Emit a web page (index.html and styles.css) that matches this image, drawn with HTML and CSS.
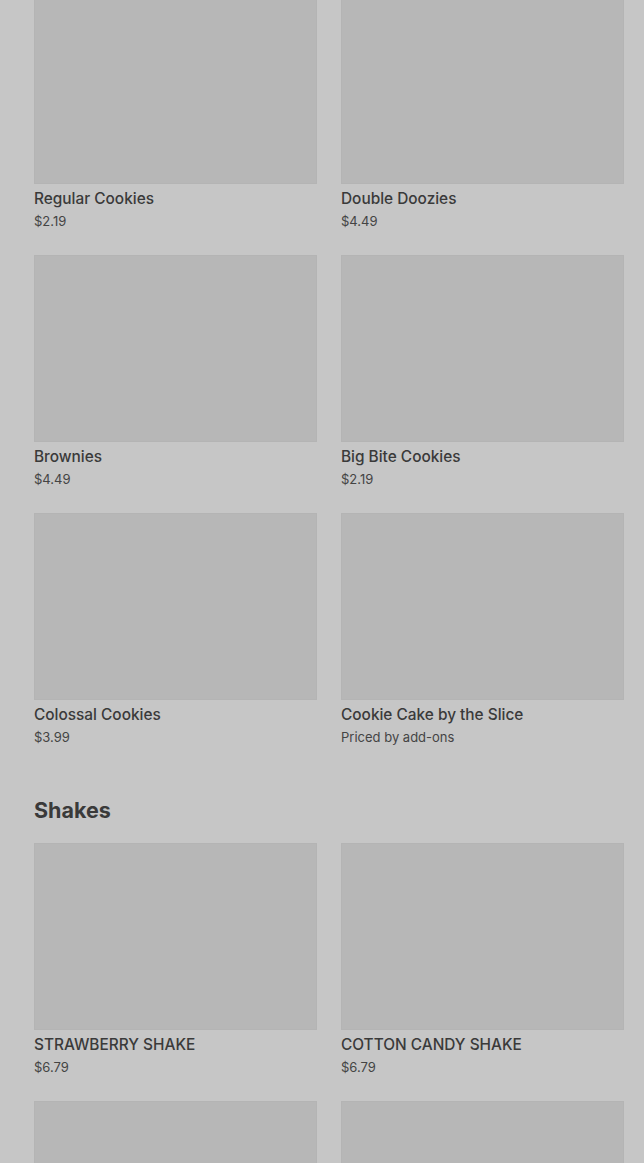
FILE: index.html
```html
<!DOCTYPE html>
<html lang="en">
<head>
    <meta charset="UTF-8">
    <meta name="viewport" content="width=device-width, initial-scale=1.0">
    <title>Menu</title>
    <link rel="stylesheet" href="styles.css">
</head>
<body>
    <main class="menu">
        <section class="section">
            <div class="grid">
                <div class="item">
                    <div class="photo"></div>
                    <p class="name">Regular Cookies</p>
                    <p class="price">$2.19</p>
                </div>
                <div class="item">
                    <div class="photo"></div>
                    <p class="name">Double Doozies</p>
                    <p class="price">$4.49</p>
                </div>
                <div class="item">
                    <div class="photo"></div>
                    <p class="name">Brownies</p>
                    <p class="price">$4.49</p>
                </div>
                <div class="item">
                    <div class="photo"></div>
                    <p class="name">Big Bite Cookies</p>
                    <p class="price">$2.19</p>
                </div>
                <div class="item">
                    <div class="photo"></div>
                    <p class="name">Colossal Cookies</p>
                    <p class="price">$3.99</p>
                </div>
                <div class="item">
                    <div class="photo"></div>
                    <p class="name">Cookie Cake by the Slice</p>
                    <p class="price">Priced by add-ons</p>
                </div>
            </div>
        </section>

        <section class="section">
            <h2 class="section-title">Shakes</h2>
            <div class="grid">
                <div class="item">
                    <div class="photo"></div>
                    <p class="name">STRAWBERRY SHAKE</p>
                    <p class="price">$6.79</p>
                </div>
                <div class="item">
                    <div class="photo"></div>
                    <p class="name">COTTON CANDY SHAKE</p>
                    <p class="price">$6.79</p>
                </div>
                <div class="item">
                    <div class="photo"></div>
                </div>
                <div class="item">
                    <div class="photo"></div>
                </div>
            </div>
        </section>
    </main>
</body>
</html>
```

FILE: styles.css
```css
body {
    margin: 0;
    background-color: #c6c6c6;
    font-family: 'Inter', 'Roboto', sans-serif;
    color: #3a3a3a;
    overflow: hidden;
}

.menu {
    margin-top: -3px;
    padding: 0 20px 0 34px;
}

.section + .section {
    margin-top: 50px;
}

.section-title {
    margin: 0 0 19px 0;
    font-size: 21.5px;
    line-height: 28px;
    font-weight: 700;
    color: #3a3a3a;
}

.grid {
    display: grid;
    grid-template-columns: 1fr 1fr;
    column-gap: 24px;
    row-gap: 25px;
}

.photo {
    height: 187px;
    background-color: #b7b7b7;
    box-shadow: inset 0 0 0 1px rgba(0, 0, 0, 0.01);
}

.name {
    margin: 5px 0 0 0;
    font-size: 15.4px;
    line-height: 20px;
    font-weight: 500;
}

.price {
    margin: 3px 0 0 0;
    font-size: 13px;
    line-height: 18px;
    color: #444;
}
```
